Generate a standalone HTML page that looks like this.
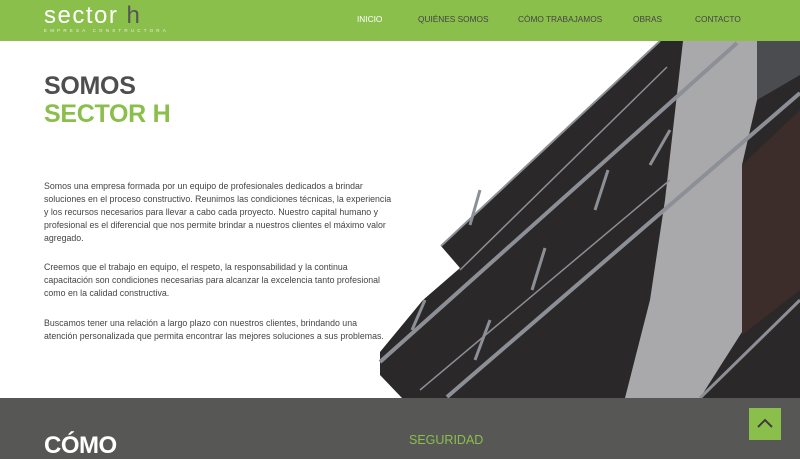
<!DOCTYPE html>
<html><head><meta charset="utf-8"><style>
*{margin:0;padding:0;box-sizing:border-box}
body{width:800px;height:459px;overflow:hidden;background:#fff;font-family:"Liberation Sans",sans-serif;position:relative}
.hdr{position:absolute;left:0;top:0;width:800px;height:41px;background:#8bbf4c}
.logo{position:absolute;left:44px;top:3px;color:#fff;font-size:24px;font-weight:300;letter-spacing:1.5px;line-height:26px}
.logo b{font-weight:300;color:#555}
.tag{position:absolute;left:44px;top:28px;color:#e6f2d8;font-size:4.5px;letter-spacing:3.2px}
.nav a{position:absolute;top:14px;font-size:8.3px;color:#444;text-decoration:none}
h1{position:absolute;left:44px;top:72px;font-size:25px;line-height:28px;font-weight:bold;color:#4e4e4e;letter-spacing:-0.3px}
h1 span{color:#8bbf4c}
.p{position:absolute;left:44px;width:352px;font-size:8.8px;line-height:13px;color:#444}
.ft{position:absolute;left:0;top:398px;width:800px;height:61px;background:#575756}
.como{position:absolute;left:44px;top:432px;color:#fff;font-weight:bold;font-size:24px;letter-spacing:-0.5px}
.seg{position:absolute;left:409px;top:433px;color:#8bbf4c;font-size:12.5px}
.up{position:absolute;left:749px;top:408px;width:32px;height:32px;background:#8bbf4c}
</style></head><body>
<div class="hdr">
<div class="logo">sector <b>h</b></div>
<div class="tag">EMPRESA CONSTRUCTORA</div>
<div class="nav"><a style="left:357px;color:#fff">INICIO</a><a style="left:418px">QUIÉNES SOMOS</a><a style="left:518px">CÓMO TRABAJAMOS</a><a style="left:633px">OBRAS</a><a style="left:695px">CONTACTO</a></div>
</div>
<svg style="position:absolute;left:0;top:0" width="800" height="459">
<polygon points="660,41 800,41 800,398 402,398 380,375 380,352 423,300 460,268 441,246" fill="#2a2828"/>
<polygon points="683,41 757,41 757,100 742,165 742,332 700,398 625,398 650,300 665,200" fill="#a9a9ab"/>
<polygon points="742,165 800,110 800,290 742,335" fill="#3c2c2a"/>
<polygon points="757,41 800,41 800,75 757,100" fill="#4a4c50"/>
<g stroke="#8c9096" fill="none">
<line x1="660" y1="41" x2="441" y2="246" stroke-width="2"/>
<line x1="737" y1="43" x2="380" y2="362" stroke-width="4"/>
<line x1="800" y1="93" x2="447" y2="397" stroke-width="4"/>
<line x1="667" y1="67" x2="460" y2="270" stroke-width="1.5"/>
<line x1="670" y1="180" x2="420" y2="390" stroke-width="1.5"/>
<line x1="800" y1="300" x2="700" y2="398" stroke-width="3"/>
<line x1="670" y1="130" x2="650" y2="165" stroke-width="3"/>
<line x1="608" y1="170" x2="595" y2="210" stroke-width="3"/>
<line x1="545" y1="248" x2="532" y2="290" stroke-width="3"/>
<line x1="490" y1="320" x2="475" y2="360" stroke-width="3"/>
<line x1="480" y1="190" x2="470" y2="225" stroke-width="3"/>
<line x1="425" y1="300" x2="412" y2="330" stroke-width="3"/>
</g>
</svg>
<h1>SOMOS<br><span>SECTOR H</span></h1>
<div class="p" style="top:180px">Somos una empresa formada por un equipo de profesionales dedicados a brindar soluciones en el proceso constructivo. Reunimos las condiciones técnicas, la experiencia y los recursos necesarios para llevar a cabo cada proyecto. Nuestro capital humano y profesional es el diferencial que nos permite brindar a nuestros clientes el máximo valor agregado.</div>
<div class="p" style="top:261px">Creemos que el trabajo en equipo, el respeto, la responsabilidad y la continua capacitación son condiciones necesarias para alcanzar la excelencia tanto profesional como en la calidad constructiva.</div>
<div class="p" style="top:317px;width:340px">Buscamos tener una relación a largo plazo con nuestros clientes, brindando una atención personalizada que permita encontrar las mejores soluciones a sus problemas.</div>
<div class="ft"></div>
<div class="como">CÓMO</div>
<div class="seg">SEGURIDAD</div>
<div class="up"><svg width="32" height="32"><polyline points="9,19 16,12 23,19" fill="none" stroke="#3d3d3d" stroke-width="2"/></svg></div>
</body></html>
